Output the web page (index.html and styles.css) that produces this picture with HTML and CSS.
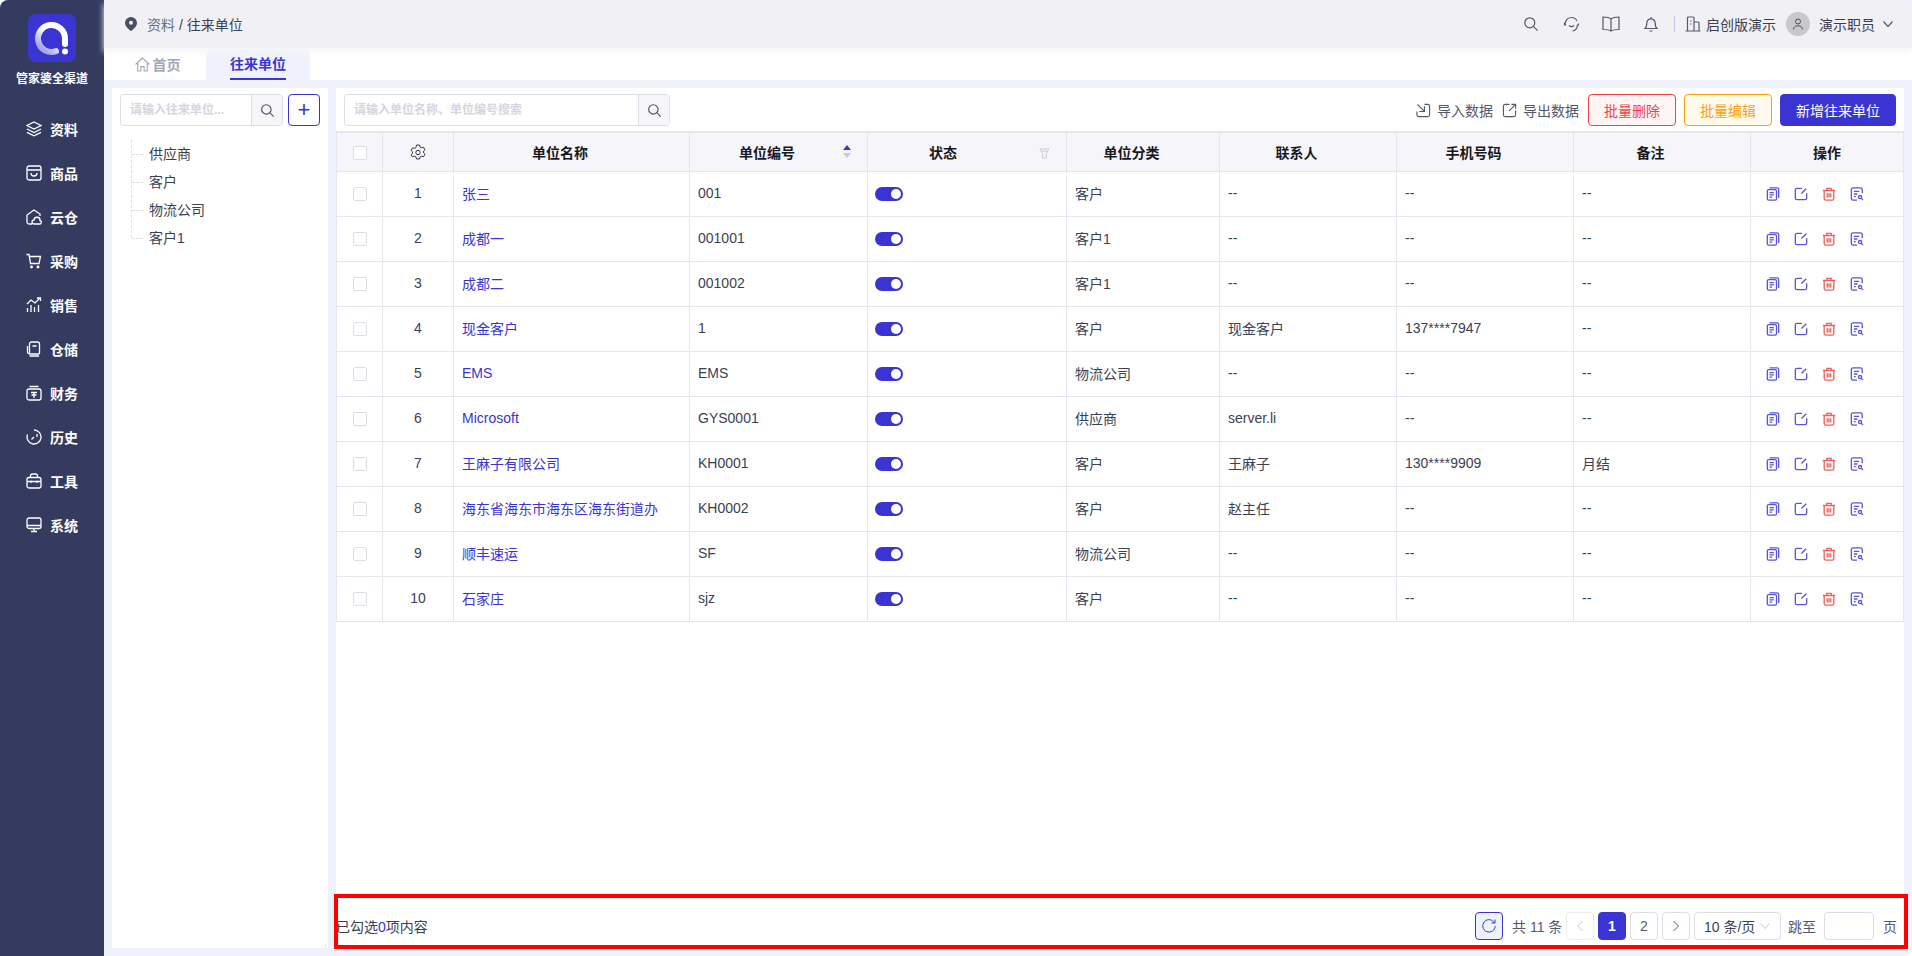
FILE: index.html
```html
<!DOCTYPE html>
<html lang="zh-CN">
<head>
  <meta charset="UTF-8" />
  <title>往来单位</title>
  <link rel="stylesheet" href="styles.css">
</head>
<body>
  <!-- Shared icons -->
  <svg class="sprite" width="0" height="0">
    <defs>
      <linearGradient id="logo-arc" x1="0.900" y1="0.100" x2="0.200" y2="0.900">
        <stop offset="0.450" stop-color="#fff" />
        <stop offset="1" stop-color="#a9a6e8" />
      </linearGradient>
    </defs>
    <symbol id="i-search" viewBox="0 0 16 16"><circle cx="6.800" cy="6.800" r="5" /><path d="M10.600 10.600l4 4" /></symbol>
    <symbol id="i-copy" viewBox="0 0 16 16"><rect x="1.500" y="3" width="10.500" height="12" rx="1.500" /><path d="M4 1h8.500a2 2 0 0 1 2 2v9.500M4 6.500h5M4 9h5M4 11.500h3" /></symbol>
    <symbol id="i-edit" viewBox="0 0 16 16"><path d="M9 1.500H3.500a2 2 0 0 0-2 2v9a2 2 0 0 0 2 2h9a2 2 0 0 0 2-2V7M14 2L8.500 7.500" /></symbol>
    <symbol id="i-trash" viewBox="0 0 16 16"><path d="M1 4h14M5.500 4V1.500h5V4M2.500 4v9a2 2 0 0 0 2 2h7a2 2 0 0 0 2-2V4M6 7v5M8 7v5M10 7v5" /></symbol>
    <symbol id="i-view" viewBox="0 0 16 16"><path d="M14 7V3a2 2 0 0 0-2-2H3.500a2 2 0 0 0-2 2v10a2 2 0 0 0 2 2H8M4.500 5h6M4.500 8h4M4.500 11h2" /><circle cx="11.500" cy="11.500" r="1.800" /><path d="M13 13l1.800 1.800" /></symbol>
  </svg>

  <!-- Sidebar -->
  <aside class="sidebar">
    <div class="logo">
      <svg width="48" height="48" viewBox="0 0 48 48">
        <path d="M37 30V24.500A13.500 13.500 0 1 0 28 37.200" fill="none" stroke="url(#logo-arc)" stroke-width="6" stroke-linecap="round" />
        <circle cx="37" cy="37.500" r="3" fill="#fff" />
      </svg>
    </div>
    <div class="brand">管家婆全渠道</div>
    <nav class="menu">
      <a class="menu-item"><svg viewBox="0 0 16 16"><path d="M8 1l7 3.500-7 3.500-7-3.500zM1 8l7 3.500L15 8M1 11.300l7 3.500 7-3.500" /></svg>资料</a>
      <a class="menu-item"><svg viewBox="0 0 16 16"><rect x="1" y="1" width="14" height="14" rx="2" /><path d="M1 5h14M5 8a3 3 0 0 0 6 0" /></svg>商品</a>
      <a class="menu-item"><svg viewBox="0 0 16 16"><path d="M6 15H3a2 2 0 0 1-2-2V6l7-5 6 4v2" /><path d="M8 15a2 2 0 0 1 0-4 3 3 0 0 1 6 .5 1.800 1.800 0 0 1 0 3.500z" /></svg>云仓</a>
      <a class="menu-item"><svg viewBox="0 0 16 16"><path d="M.5 1.500h2.500l1.500 9h8.500l1.500-7H3.500" /><circle cx="5.500" cy="14" r=".8" /><circle cx="12" cy="14" r=".8" /></svg>采购</a>
      <a class="menu-item"><svg viewBox="0 0 16 16"><path d="M1 7l4-4 4 3 5-5M11 1h3.500v3M1.500 11v4M5 8v7M8.500 10v5M12.500 8v7" /></svg>销售</a>
      <a class="menu-item"><svg viewBox="0 0 16 16"><path d="M3.500 13V3a2 2 0 0 1 2-2h6a2 2 0 0 1 2 2v9a1 1 0 0 1-1 1H3.500a2 2 0 0 1-2-2V5M3.500 15H13M6.500 5h4" /></svg>仓储</a>
      <a class="menu-item"><svg viewBox="0 0 16 16"><rect x="1" y="4" width="14" height="11" rx="2" /><path d="M3.500 1.500h9M5 7.500h6M8 7.500V13M5.500 10h5" /></svg>财务</a>
      <a class="menu-item"><svg viewBox="0 0 16 16"><path d="M8 1a7 7 0 1 1-6.500 4.500M8 8L5.500 10.500M11 5v3" /></svg>历史</a>
      <a class="menu-item"><svg viewBox="0 0 16 16"><rect x="1" y="4.500" width="14" height="10.500" rx="2" /><path d="M4.500 4.500V3a2 2 0 0 1 2-2h3a2 2 0 0 1 2 2v1.500M1 8.500h14M5 7.500v2.500M11 7.500v2.500" /></svg>工具</a>
      <a class="menu-item"><svg viewBox="0 0 16 16"><rect x="1" y="1" width="14" height="10.500" rx="2" /><path d="M1 8.500h14M8 11.500v3M5 14.500h6" /></svg>系统</a>
    </nav>
  </aside>

  <div class="main">
    <!-- Top bar -->
    <header class="topbar">
      <div class="crumb">
        <svg class="pin" viewBox="0 0 12 14"><path d="M6 0a6 6 0 0 1 6 6c0 3.500-4 6.700-6 8-2-1.300-6-4.500-6-8a6 6 0 0 1 6-6z" fill="#4b4f63" /><circle cx="6" cy="5.800" r="2" fill="#f1f1f5" /></svg>
        <span class="crumb-parent">资料</span> / 往来单位
      </div>
      <div class="top-actions">
        <svg class="ti ti-search"><use href="#i-search" /></svg>
        <svg class="ti ti-head" viewBox="0 0 17 16"><path d="M2.500 9.500A6.200 6.200 0 0 1 8.500 1.500a6 6 0 0 1 5.500 3.500M14.500 8.500c0 3.300-2 6-5 6.500M1.500 6.500v3M15.500 7.500a1.500 1.500 0 0 1-1.500 2M6 9.500c1.500 1.300 3.500 1.300 5 0" /></svg>
        <svg class="ti ti-book" viewBox="0 0 18 16"><path d="M9 3C7.500 1.500 5 1 1 1v12.500c4 0 6.500.5 8 1.500 1.500-1 4-1.500 8-1.500V1c-4 0-6.500.5-8 2zM9 3v12" /></svg>
        <svg class="ti ti-bell" viewBox="0 0 14 16"><path d="M1 12.500h12c-1.500-1-1.800-2.500-1.800-5.500a4.200 4.200 0 0 0-8.400 0c0 3-.3 4.500-1.800 5.500zM5.500 15h3M7 1v1.500" /></svg>
        <span class="divider"></span>
        <svg class="ti ti-build" viewBox="0 0 16 16"><path d="M2.500 15V2a1 1 0 0 1 1-1H8a1 1 0 0 1 1 1v13M9 6h4a1 1 0 0 1 1 1v8M.5 15h15M5 5h1.500M5 8h1.500" /></svg>
        <span class="company">启创版演示</span>
        <span class="avatar"><svg viewBox="0 0 12 12"><circle cx="6" cy="3.500" r="2.500" /><path d="M1.500 11.500c0-5 9-5 9 0" /></svg></span>
        <span class="user">演示职员</span>
        <svg class="ti ti-chevron" viewBox="0 0 10 6"><path d="M.5.500L5 5.500 9.500.500" /></svg>
      </div>
    </header>

    <!-- Tabs -->
    <div class="tabs">
      <a class="tab"><svg viewBox="0 0 14 14"><path d="M.5 7L7 1l6.500 6M2.500 5.500V13h3V9h3v4h3V5.500" /></svg>首页</a>
      <a class="tab active"><span>往来单位</span></a>
    </div>

    <div class="content">
      <!-- Category tree -->
      <section class="tree-panel">
        <div class="tree-head">
          <div class="search tree-search">
            <input placeholder="请输入往来单位..." />
            <button class="search-btn"><svg><use href="#i-search" /></svg></button>
          </div>
          <button class="add-btn">+</button>
        </div>
        <ul class="tree">
          <li>供应商</li>
          <li>客户</li>
          <li>物流公司</li>
          <li>客户1</li>
        </ul>
      </section>

      <!-- Partner list -->
      <section class="list-panel">
        <div class="toolbar">
          <div class="search list-search">
            <input placeholder="请输入单位名称、单位编号搜索" />
            <button class="search-btn"><svg><use href="#i-search" /></svg></button>
          </div>
          <div class="tools">
            <a class="tool-link"><svg viewBox="0 0 16 16"><path d="M9 1.500h3.500a2 2 0 0 1 2 2v9a2 2 0 0 1-2 2H3a2 2 0 0 1-2-2V9M1.500 1.500L9 9M9 3.500V9H3.500" /></svg>导入数据</a>
            <a class="tool-link"><svg viewBox="0 0 16 16"><path d="M8 1.500H3.500a2 2 0 0 0-2 2v9a2 2 0 0 0 2 2h9a2 2 0 0 0 2-2V8M7.500 8.500l7-7M10 1.500h4.500V6" /></svg>导出数据</a>
            <button class="btn btn-red">批量删除</button>
            <button class="btn btn-orange">批量编辑</button>
            <button class="btn btn-primary">新增往来单位</button>
          </div>
        </div>

        <div class="table-wrap">
          <table class="grid">
            <colgroup>
              <col class="c-check" /><col class="c-seq" /><col class="c-name" /><col class="c-code" /><col class="c-state" />
              <col class="c-type" /><col class="c-person" /><col class="c-person" /><col class="c-person" /><col class="c-ops" />
            </colgroup>
            <thead>
              <tr>
                <th><span class="check"></span></th>
                <th><svg class="gear" viewBox="0 0 16 16"><path d="M6.500 1h3l.5 2 1.500.800 2-.6 1.500 2.600-1.500 1.400v1.600l1.500 1.400-1.500 2.600-2-.6-1.500.8-.5 2h-3l-.5-2-1.500-.8-2 .6L1 10.800l1.500-1.400V7.800L1 6.400 2.500 3.800l2 .6L6 3.600z" /><circle cx="8" cy="8.500" r="2.200" /></svg></th>
                <th class="shift">单位名称</th>
                <th class="shift has-icon">单位编号<span class="sort"><i class="up"></i><i class="down"></i></span></th>
                <th class="shift-more has-icon">状态<svg class="filter" viewBox="0 0 12 12"><path d="M1 1h10L8 6v5H4V6zM2.500 3.500h7" /></svg></th>
                <th class="shift">单位分类</th>
                <th class="shift">联系人</th>
                <th class="shift">手机号码</th>
                <th class="shift">备注</th>
                <th>操作</th>
              </tr>
            </thead>
            <tbody>
              <tr><td><span class="check"></span></td><td>1</td><td class="link">张三</td><td>001</td><td><span class="toggle"></span></td><td>客户</td><td>--</td><td>--</td><td>--</td><td class="ops"><svg><use href="#i-copy" /></svg><svg><use href="#i-edit" /></svg><svg class="del"><use href="#i-trash" /></svg><svg><use href="#i-view" /></svg></td></tr>
              <tr><td><span class="check"></span></td><td>2</td><td class="link">成都一</td><td>001001</td><td><span class="toggle"></span></td><td>客户1</td><td>--</td><td>--</td><td>--</td><td class="ops"><svg><use href="#i-copy" /></svg><svg><use href="#i-edit" /></svg><svg class="del"><use href="#i-trash" /></svg><svg><use href="#i-view" /></svg></td></tr>
              <tr><td><span class="check"></span></td><td>3</td><td class="link">成都二</td><td>001002</td><td><span class="toggle"></span></td><td>客户1</td><td>--</td><td>--</td><td>--</td><td class="ops"><svg><use href="#i-copy" /></svg><svg><use href="#i-edit" /></svg><svg class="del"><use href="#i-trash" /></svg><svg><use href="#i-view" /></svg></td></tr>
              <tr><td><span class="check"></span></td><td>4</td><td class="link">现金客户</td><td>1</td><td><span class="toggle"></span></td><td>客户</td><td>现金客户</td><td>137****7947</td><td>--</td><td class="ops"><svg><use href="#i-copy" /></svg><svg><use href="#i-edit" /></svg><svg class="del"><use href="#i-trash" /></svg><svg><use href="#i-view" /></svg></td></tr>
              <tr><td><span class="check"></span></td><td>5</td><td class="link">EMS</td><td>EMS</td><td><span class="toggle"></span></td><td>物流公司</td><td>--</td><td>--</td><td>--</td><td class="ops"><svg><use href="#i-copy" /></svg><svg><use href="#i-edit" /></svg><svg class="del"><use href="#i-trash" /></svg><svg><use href="#i-view" /></svg></td></tr>
              <tr><td><span class="check"></span></td><td>6</td><td class="link">Microsoft</td><td>GYS0001</td><td><span class="toggle"></span></td><td>供应商</td><td>server.li</td><td>--</td><td>--</td><td class="ops"><svg><use href="#i-copy" /></svg><svg><use href="#i-edit" /></svg><svg class="del"><use href="#i-trash" /></svg><svg><use href="#i-view" /></svg></td></tr>
              <tr><td><span class="check"></span></td><td>7</td><td class="link">王麻子有限公司</td><td>KH0001</td><td><span class="toggle"></span></td><td>客户</td><td>王麻子</td><td>130****9909</td><td>月结</td><td class="ops"><svg><use href="#i-copy" /></svg><svg><use href="#i-edit" /></svg><svg class="del"><use href="#i-trash" /></svg><svg><use href="#i-view" /></svg></td></tr>
              <tr><td><span class="check"></span></td><td>8</td><td class="link">海东省海东市海东区海东街道办</td><td>KH0002</td><td><span class="toggle"></span></td><td>客户</td><td>赵主任</td><td>--</td><td>--</td><td class="ops"><svg><use href="#i-copy" /></svg><svg><use href="#i-edit" /></svg><svg class="del"><use href="#i-trash" /></svg><svg><use href="#i-view" /></svg></td></tr>
              <tr><td><span class="check"></span></td><td>9</td><td class="link">顺丰速运</td><td>SF</td><td><span class="toggle"></span></td><td>物流公司</td><td>--</td><td>--</td><td>--</td><td class="ops"><svg><use href="#i-copy" /></svg><svg><use href="#i-edit" /></svg><svg class="del"><use href="#i-trash" /></svg><svg><use href="#i-view" /></svg></td></tr>
              <tr><td><span class="check"></span></td><td>10</td><td class="link">石家庄</td><td>sjz</td><td><span class="toggle"></span></td><td>客户</td><td>--</td><td>--</td><td>--</td><td class="ops"><svg><use href="#i-copy" /></svg><svg><use href="#i-edit" /></svg><svg class="del"><use href="#i-trash" /></svg><svg><use href="#i-view" /></svg></td></tr>
            </tbody>
          </table>
        </div>

        <!-- Footer / pagination -->
        <div class="list-foot">
          <div class="picked">已勾选<b>0</b>项内容</div>
          <div class="pager">
            <button class="pg refresh"><svg viewBox="0 0 16 16"><path d="M13.500 5A6.200 6.200 0 1 0 14.200 8M14 1.500V5h-3.500" /></svg></button>
            <span class="total">共 11 条</span>
            <button class="pg pg-off"><svg viewBox="0 0 8 12"><path d="M6.500 1L1.500 6l5 5" /></svg></button>
            <button class="pg pg-on">1</button>
            <button class="pg">2</button>
            <button class="pg"><svg viewBox="0 0 8 12"><path d="M1.500 1l5 5-5 5" /></svg></button>
            <div class="size">10 条/页<svg viewBox="0 0 10 6"><path d="M.5.500L5 5.500 9.500.500" /></svg></div>
            <span class="jump">跳至</span>
            <span class="jump-box"></span>
            <span class="jump-end">页</span>
          </div>
        </div>
      </section>
    </div>
  </div>
</body>
</html>
```

FILE: styles.css
```css
/* ====== Basic Page Setup ====== */
* {
  box-sizing: border-box;
}
html,
body {
  height: 100%;
}
html {
  background: #fff;
}
body {
  margin: 0;
  display: flex;
  overflow: hidden;
  color: #3b3f52;
  font-family: "Liberation Sans", "Noto Sans CJK SC", sans-serif;
  font-size: 14px;
}
button,
input {
  font-family: inherit;
}
.sprite {
  position: absolute;
}

/* ====== Sidebar ====== */
.sidebar {
  flex: 0 0 104px;
  background: #343b5f;
  color: #fff;
  border-top-left-radius: 8px;
  display: flex;
  flex-direction: column;
  align-items: center;
  padding-top: 14px;
}
.logo {
  width: 48px;
  height: 48px;
  border-radius: 8px;
  background: #3a35d2;
}
.brand {
  margin-top: 9px;
  font-size: 12px;
  font-weight: 700;
  line-height: 16px;
}
.menu {
  margin-top: 20px;
  display: flex;
  flex-direction: column;
  width: 100%;
}
.menu-item {
  height: 44px;
  padding-left: 26px;
  display: flex;
  align-items: center;
  gap: 8px;
  font-weight: 700;
}
.menu-item svg {
  width: 16px;
  height: 16px;
  fill: none;
  stroke: #fff;
  stroke-width: 1.300;
}

/* ====== Top bar ====== */
.main {
  flex: 1;
  min-width: 0;
  display: flex;
  flex-direction: column;
  background: #eff1fd;
  border-bottom-right-radius: 8px;
}
.topbar {
  height: 48px;
  flex: none;
  background: #f1f1f5;
  border-top-right-radius: 8px;
  box-shadow: 0 4px 6px #f6f6f8;
  position: relative;
  display: flex;
  align-items: center;
  justify-content: space-between;
  padding: 0 19px 0 21px;
}
.crumb {
  display: flex;
  align-items: center;
  gap: 4px;
  color: #3b3f52;
}
.pin {
  width: 12px;
  height: 14px;
  margin-right: 6px;
}
.crumb-parent {
  color: #6a6d7d;
}
.top-actions {
  display: flex;
  align-items: center;
}
.ti {
  width: 16px;
  height: 16px;
  fill: none;
  stroke: #55586a;
  stroke-width: 1.200;
}
.ti-head {
  width: 17px;
  margin-left: 24px;
}
.ti-book {
  width: 18px;
  margin-left: 22px;
}
.ti-bell {
  width: 14px;
  margin-left: 24px;
}
.divider {
  width: 1px;
  height: 16px;
  background: #c3c8e4;
  margin: 0 10px 0 16px;
}
.company {
  margin-left: 5px;
  color: #3b3f52;
}
.avatar {
  width: 24px;
  height: 24px;
  margin: 0 9px 0 10px;
  border-radius: 50%;
  background: #c9c9c9;
  display: flex;
  align-items: center;
  justify-content: center;
}
.avatar svg {
  width: 12px;
  height: 12px;
  fill: none;
  stroke: #4a4d5f;
}
.ti-chevron {
  width: 10px;
  height: 6px;
  margin-left: 8px;
}

/* ====== Tabs ====== */
.tabs {
  height: 32px;
  flex: none;
  background: #fff;
  display: flex;
}
.tab {
  width: 102px;
  padding-left: 5px;
  display: flex;
  align-items: center;
  justify-content: center;
  gap: 3px;
  font-weight: 700;
  color: #a2a7b8;
}
.tab svg {
  width: 15px;
  height: 15px;
  fill: none;
  stroke: #a2a7b8;
}
.tab.active {
  width: 104px;
  padding-left: 0;
  background: #eff1fd;
  color: #3a35d2;
  border-radius: 8px 8px 0 0;
}
.tab.active span {
  height: 100%;
  line-height: 32px;
  border-bottom: 2px solid #3a35d2;
}

/* ====== Content ====== */
.content {
  flex: 1;
  min-height: 0;
  display: flex;
  gap: 8px;
  padding: 8px;
}
.tree-panel {
  width: 216px;
  flex: none;
  background: #fff;
  padding: 6px 8px;
}
.tree-head {
  display: flex;
  gap: 5px;
}
.search {
  height: 32px;
  display: flex;
  border: 1px solid #dcdde6;
  border-radius: 4px;
  overflow: hidden;
}
.search input {
  flex: 1;
  min-width: 0;
  border: 0;
  outline: 0;
  padding: 0 9px;
  font-size: 12px;
  font-weight: 700;
}
.search input::placeholder {
  color: #d4d5de;
}
.search-btn {
  width: 31px;
  flex: none;
  padding: 0;
  border: 0;
  border-left: 1px solid #dcdde6;
  background: #f6f6fa;
  display: flex;
  align-items: center;
  justify-content: center;
}
.search-btn svg {
  width: 15px;
  height: 15px;
  fill: none;
  stroke: #4c4f61;
  stroke-width: 1.200;
}
.tree-search {
  width: 163px;
}
.add-btn {
  width: 32px;
  height: 32px;
  padding: 0;
  border: 1px solid #3a35d2;
  border-radius: 4px;
  background: #fff;
  color: #3a35d2;
  font-size: 22px;
  line-height: 28px;
}
.tree {
  list-style: none;
  margin: 14px 0 0 11px;
  padding: 0;
  border-left: 1px dashed #dcdde6;
  height: 98px;
}
.tree li {
  height: 28px;
  line-height: 28px;
  padding-left: 17px;
  position: relative;
}
.tree li::before {
  content: "";
  position: absolute;
  left: 0;
  top: 14px;
  width: 11px;
  border-top: 1px dashed #dcdde6;
}

/* ====== List panel ====== */
.list-panel {
  flex: 1;
  min-width: 0;
  background: #fff;
  display: flex;
  flex-direction: column;
}
.toolbar {
  height: 43px;
  flex: none;
  display: flex;
  justify-content: space-between;
  padding: 6px 8px 5px;
}
.list-search {
  width: 326px;
}
.tools {
  display: flex;
  align-items: center;
  gap: 8px;
}
.tool-link {
  display: flex;
  align-items: center;
  gap: 6px;
  margin-right: 1px;
  color: #55586a;
}
.tool-link svg {
  width: 15px;
  height: 15px;
  fill: none;
  stroke: #55586a;
  stroke-width: 1.200;
}
.btn {
  height: 32px;
  width: 88px;
  padding: 0;
  border: 1px solid;
  border-radius: 4px;
  font-size: 14px;
}
.btn-red {
  color: #f5413f;
  border-color: #f5413f;
  background: #fff5f4;
}
.btn-orange {
  color: #ff9e0d;
  border-color: #ff9e0d;
  background: #fff9ec;
}
.btn-primary {
  width: 116px;
  color: #fff;
  border-color: #3a35d2;
  background: #3a35d2;
}

/* ====== Table ====== */
.table-wrap {
  flex: 1;
  min-height: 0;
}
.grid {
  width: 1567px;
  table-layout: fixed;
  border-collapse: collapse;
  border-top: 2px solid #e7e7ee;
}
.c-check { width: 46px; }
.c-seq { width: 71px; }
.c-name { width: 236px; }
.c-code { width: 178px; }
.c-state { width: 199px; }
.c-type { width: 153px; }
.c-person { width: 177px; }
.c-ops { width: 153px; }
.grid th,
.grid td {
  border: 1px solid #e6e6ee;
  padding: 0 8px;
  white-space: nowrap;
  overflow: hidden;
}
.grid th {
  height: 39px;
  background: #f6f6fa;
  color: #17181f;
  font-weight: 700;
  text-align: center;
}
.grid th.shift {
  padding-right: 31px;
}
.grid th.shift-more {
  padding-right: 56px;
}
.grid td {
  height: 45px;
  padding-bottom: 2px;
  color: #3b3f52;
}
.grid td:nth-child(-n + 2) {
  text-align: center;
}
.grid td.link {
  color: #3a35d2;
}
.check {
  display: inline-block;
  width: 14px;
  height: 14px;
  border: 1px solid #dcdde6;
  border-radius: 2px;
  background: #fff;
  vertical-align: middle;
}
.gear {
  width: 16px;
  height: 16px;
  fill: none;
  stroke: #33364a;
  vertical-align: middle;
}
.has-icon {
  position: relative;
}
.sort {
  position: absolute;
  right: 16px;
  top: 12px;
  display: flex;
  flex-direction: column;
  gap: 3px;
}
.sort i {
  width: 0;
  height: 0;
  border: 4px solid transparent;
  border-top: 0;
  border-bottom: 5px solid #3a35d2;
}
.sort i.down {
  border-bottom: 0;
  border-top: 5px solid #c8c9d2;
}
.filter {
  position: absolute;
  right: 16px;
  top: 15px;
  width: 11px;
  height: 11px;
  fill: none;
  stroke: #c6c7d0;
}
.toggle {
  display: block;
  position: relative;
  width: 28px;
  height: 14px;
  margin: 2px 0 0 -1px;
  border-radius: 7px;
  background: #3a35d2;
}
.toggle::after {
  content: "";
  position: absolute;
  right: 2px;
  top: 2px;
  width: 10px;
  height: 10px;
  border-radius: 50%;
  background: #fff;
}
.grid td.ops {
  padding: 0 0 0 15px;
  font-size: 0;
}
.ops svg {
  width: 14px;
  height: 14px;
  margin-right: 14px;
  fill: none;
  stroke: #5a54d8;
  stroke-width: 1.500;
  vertical-align: middle;
}
.ops svg.del {
  stroke: #f0605a;
}

/* ====== Footer / pagination ====== */
.list-foot {
  height: 55px;
  flex: none;
  margin: 0 -4px -1px -2px;
  padding-top: 8px;
  border: 4px solid #f00;
  display: flex;
  align-items: center;
  justify-content: space-between;
}
.picked {
  margin-left: -2px;
}
.picked b {
  font-weight: 400;
  color: #3a35d2;
}
.pager {
  display: flex;
  align-items: center;
  gap: 4px;
  padding-right: 7px;
  color: #55586a;
}
.pg {
  width: 28px;
  height: 28px;
  padding: 0;
  border: 1px solid #dcdde6;
  border-radius: 4px;
  background: #fff;
  color: #55586a;
  font-size: 14px;
  display: flex;
  align-items: center;
  justify-content: center;
}
.pg svg {
  width: 8px;
  height: 12px;
  fill: none;
  stroke: #55586a;
}
.pg-off {
  border-color: #ebebf0;
}
.pg-off svg {
  stroke: #c6c7d0;
}
.pg-on {
  background: #3a35d2;
  border-color: #3a35d2;
  color: #fff;
  font-weight: 700;
}
.refresh {
  border-color: #3a35d2;
  background: #eff1fd;
}
.refresh svg {
  width: 16px;
  height: 16px;
  stroke: #3a35d2;
}
.total {
  margin-left: 5px;
  width: 50px;
  white-space: nowrap;
}
.size {
  width: 87px;
  height: 28px;
  border: 1px solid #dcdde6;
  border-radius: 4px;
  display: flex;
  align-items: center;
  justify-content: space-between;
  padding: 0 10px 0 9px;
  color: #3b3f52;
  white-space: nowrap;
}
.size svg {
  width: 10px;
  height: 6px;
  fill: none;
  stroke: #c6c7d0;
}
.jump {
  margin-left: 3px;
}
.jump-box {
  width: 50px;
  height: 28px;
  margin-left: 4px;
  border: 1px solid #dcdde6;
  border-radius: 4px;
}
.jump-end {
  margin-left: 5px;
}
```
